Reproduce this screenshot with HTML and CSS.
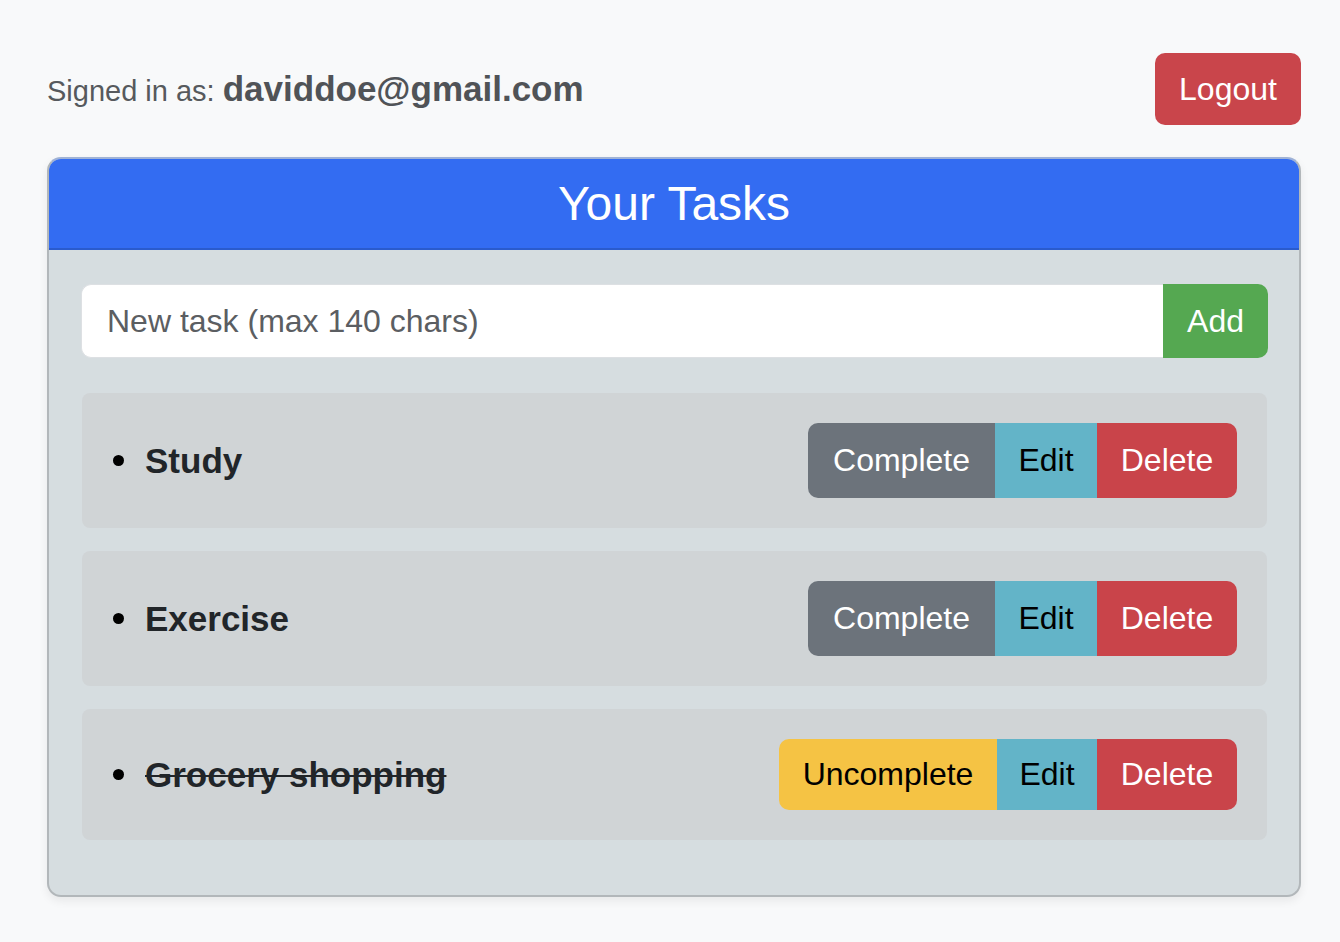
FILE: index.html
```html
<!DOCTYPE html>
<html lang="en">
<head>
<meta charset="utf-8">
<title>Your Tasks</title>
<link rel="stylesheet" href="styles.css">
</head>
<body>
<div class="page">
  <div class="topbar">
    <div class="signed">Signed in as: <strong class="email">daviddoe@gmail.com</strong></div>
    <button class="btn btn-logout">Logout</button>
  </div>
  <div class="card">
    <div class="card-header">Your Tasks</div>
    <div class="card-body">
      <form class="input-group">
        <input class="task-input" type="text" placeholder="New task (max 140 chars)">
        <button class="btn btn-add" type="button">Add</button>
      </form>
      <ul class="task-list">
        <li class="task">
          <span class="task-name">Study</span>
          <div class="btn-group">
            <button class="btn btn-complete">Complete</button>
            <button class="btn btn-edit">Edit</button>
            <button class="btn btn-delete">Delete</button>
          </div>
        </li>
        <li class="task">
          <span class="task-name">Exercise</span>
          <div class="btn-group">
            <button class="btn btn-complete">Complete</button>
            <button class="btn btn-edit">Edit</button>
            <button class="btn btn-delete">Delete</button>
          </div>
        </li>
        <li class="task done">
          <span class="task-name">Grocery shopping</span>
          <div class="btn-group short">
            <button class="btn btn-uncomplete">Uncomplete</button>
            <button class="btn btn-edit">Edit</button>
            <button class="btn btn-delete">Delete</button>
          </div>
        </li>
      </ul>
    </div>
  </div>
</div>
</body>
</html>
```
FILE: styles.css
```css
* { box-sizing: border-box; }
html, body { margin: 0; padding: 0; }
body {
  background: #f8f9fa;
  font-family: "Liberation Sans", Arial, sans-serif;
  color: #212529;
}
.page {
  padding: 53px 39px 40px 47px;
}
.topbar {
  display: flex;
  justify-content: space-between;
  align-items: center;
  height: 72px;
}
.signed {
  font-size: 29px;
  color: #56595d;
}
.email {
  font-size: 35px;
  font-weight: bold;
  color: #505357;
}
.btn {
  font-family: "Liberation Sans", Arial, sans-serif;
  border: none;
  margin: 0;
  font-size: 32px;
  padding: 0 25px;
  cursor: pointer;
}
.btn-logout {
  height: 72px;
  width: 146px;
  padding: 0;
  background: #c9454b;
  color: #fff;
  border-radius: 10px;
  font-size: 32px;
}
.card {
  margin-top: 32px;
  border: 2px solid #b2b7ba;
  border-top-color: #9fb2d6;
  border-radius: 14px;
  background: #d6dde0;
  overflow: hidden;
  box-shadow: 0 4px 10px rgba(0, 0, 0, 0.07);
}
.card-header {
  background: #336cf2;
  color: #fff;
  text-align: center;
  font-size: 48px;
  height: 91px;
  line-height: 89px;
  border-bottom: 2px solid #2a5bcd;
}
.card-body {
  padding: 34px 31px 55px 32px;
}
.input-group {
  display: flex;
  height: 74px;
  margin: 0 0 35px 0;
}
.task-input {
  flex: 1;
  border: 1px solid #dde0e3;
  border-right: none;
  border-radius: 10px 0 0 10px;
  background: #fff;
  font-family: "Liberation Sans", Arial, sans-serif;
  font-size: 32px;
  padding: 0 0 0 25px;
  color: #212529;
  outline: none;
}
.task-input::placeholder {
  color: #5b5e62;
}
.btn-add {
  width: 105px;
  padding: 0;
  background: #55a851;
  color: #fff;
  border-radius: 0 10px 10px 0;
}
.task-list {
  list-style: none;
  margin: 0 1px 0 1px;
  padding: 0;
  display: flex;
  flex-direction: column;
  gap: 23px;
}
.task {
  display: flex;
  justify-content: space-between;
  align-items: center;
  background: #d0d4d6;
  border-radius: 8px;
  padding: 30px 30px 30px 31px;
}
.task-name {
  display: flex;
  align-items: center;
  font-size: 35px;
  font-weight: bold;
  color: #212529;
}
.task-name::before {
  content: "";
  width: 11px;
  height: 11px;
  border-radius: 50%;
  background: #000;
  margin-right: 21px;
  flex: none;
}
.done .task-name {
  text-decoration: line-through;
  text-decoration-thickness: 2px;
}
.btn-group {
  display: flex;
  height: 75px;
}
.btn-group.short {
  height: 71px;
}
.btn-group .btn:first-child { border-radius: 10px 0 0 10px; }
.btn-group .btn:last-child { border-radius: 0 10px 10px 0; }
.btn-complete {
  background: #6c737b;
  color: #fff;
  width: 187px;
  padding: 0;
}
.btn-uncomplete {
  background: #f5c344;
  color: #000;
  width: 218px;
  padding: 0;
}
.btn-edit {
  background: #63b4c8;
  color: #000;
  width: 102px;
  padding: 0;
}
.short .btn-edit { width: 100px; }
.btn-delete {
  background: #c9444a;
  color: #fff;
  width: 140px;
  padding: 0;
}
```
